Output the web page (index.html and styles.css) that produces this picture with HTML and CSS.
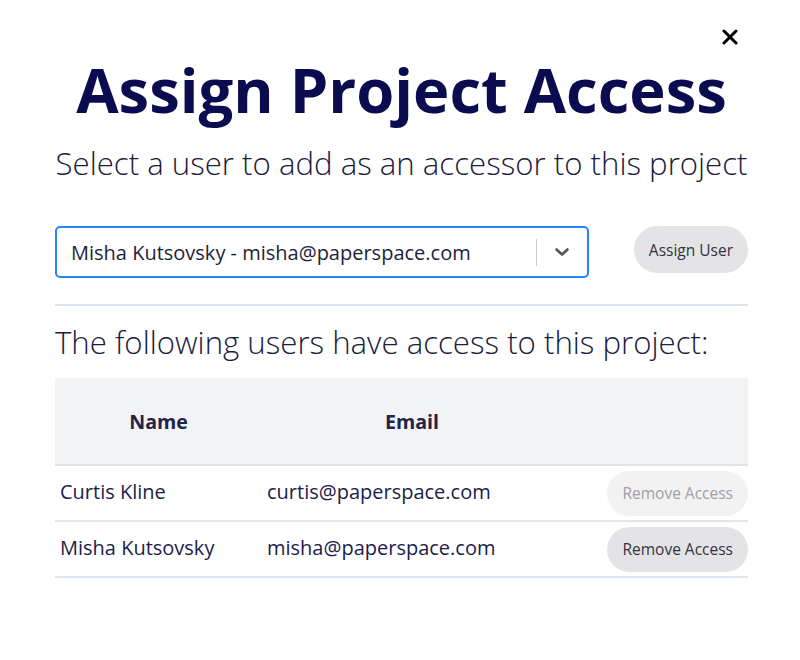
FILE: index.html
```html
<!DOCTYPE html>
<html>
<head>
<meta charset="utf-8">
<link rel="stylesheet" href="styles.css">
</head>
<body>
<div class="modal">
  <button class="close" aria-label="Close">
    <svg width="16" height="16" viewBox="0 0 16 16"><path d="M2 2 L14 14 M14 2 L2 14" stroke="#000" stroke-width="3" stroke-linecap="round"/></svg>
  </button>
  <h1 class="title">Assign Project Access</h1>
  <p class="subtitle">Select a user to add as an accessor to this project</p>
  <div class="assign-row">
    <div class="select">
      <span class="select-value">Misha Kutsovsky - misha@paperspace.com</span>
      <span class="select-sep"></span>
      <span class="select-arrow">
        <svg width="20" height="20" viewBox="0 0 20 20"><path d="M4.5 7.5 L10 12.5 L15.5 7.5" fill="none" stroke="#555" stroke-width="2.6" stroke-linecap="round" stroke-linejoin="round"/></svg>
      </span>
    </div>
    <button class="btn">Assign User</button>
  </div>
  <hr class="divider">
  <h2 class="section">The following users have access to this project:</h2>
  <table class="users">
    <thead>
      <tr><th class="c-name">Name</th><th class="c-email">Email</th><th class="c-act"></th></tr>
    </thead>
    <tbody>
      <tr><td>Curtis Kline</td><td>curtis@paperspace.com</td><td class="c-act"><button class="btn btn-disabled">Remove Access</button></td></tr>
      <tr><td>Misha Kutsovsky</td><td>misha@paperspace.com</td><td class="c-act"><button class="btn">Remove Access</button></td></tr>
    </tbody>
  </table>
</div>
</body>
</html>
```
FILE: styles.css
```css
* { box-sizing: border-box; }
html, body { margin: 0; padding: 0; background: #fff; }
body { font-family: "Open Sans", "Liberation Sans", sans-serif; color: #1c1c4a; }
.modal { position: relative; width: 800px; padding: 51px 52px 0 55px; }
.close { position: absolute; top: 29px; left: 722px; width: 16px; height: 16px; padding: 0; border: 0; background: none; display: flex; }
.title { margin: 0; text-align: center; font-size: 61.5px; line-height: 76px; font-weight: 700; color: #0b0b4f; }
.subtitle { margin: 16px 0 0; text-align: center; font-size: 31.2px; line-height: 40px; font-weight: 300; color: #1c1c3c; white-space: nowrap; }
.assign-row { margin-top: 43px; display: flex; align-items: flex-start; justify-content: space-between; }
.select { width: 534px; height: 52px; border: 2px solid #2684ff; border-radius: 5px; display: flex; align-items: center; padding-left: 14px; }
.select-value { flex: 1; font-size: 20px; color: #1e1e3c; }
.select-sep { width: 1px; height: 27px; background: #ccc; }
.select-arrow { width: 50px; display: flex; justify-content: center; align-items: center; }
.btn { font-family: inherit; font-size: 15.5px; color: #333340; background: #e4e4e7; border: 0; border-radius: 24px; height: 47px; padding: 0 15px; }
.btn-disabled { background: #f2f2f2; color: #a0a0a6; }
.divider { margin: 26px 0 0; border: 0; border-top: 2px solid #dde4ee; }
.section { margin: 16px 0 0; font-size: 31.2px; line-height: 40px; font-weight: 300; color: #1c1c3c; white-space: nowrap; }
.users { margin-top: 16px; width: 100%; border-collapse: collapse; }
.users thead tr { background: #f2f3f5; border-bottom: 2px solid #e2e3e7; }
.users th { height: 87px; font-size: 19.6px; font-weight: 700; color: #23234a; text-align: center; padding: 0; }
.c-name { width: 207px; }
.c-email { width: 300px; }
.users td { height: 56px; font-size: 20px; padding: 0 0 3px 5px; border-bottom: 2px solid #e6e6ea; }
.users tbody tr:last-child td { border-bottom-color: #dfe6f0; }
.users td.c-act { text-align: right; padding: 0; }
.users td .btn { height: 45px; padding: 0 15px; }
```
